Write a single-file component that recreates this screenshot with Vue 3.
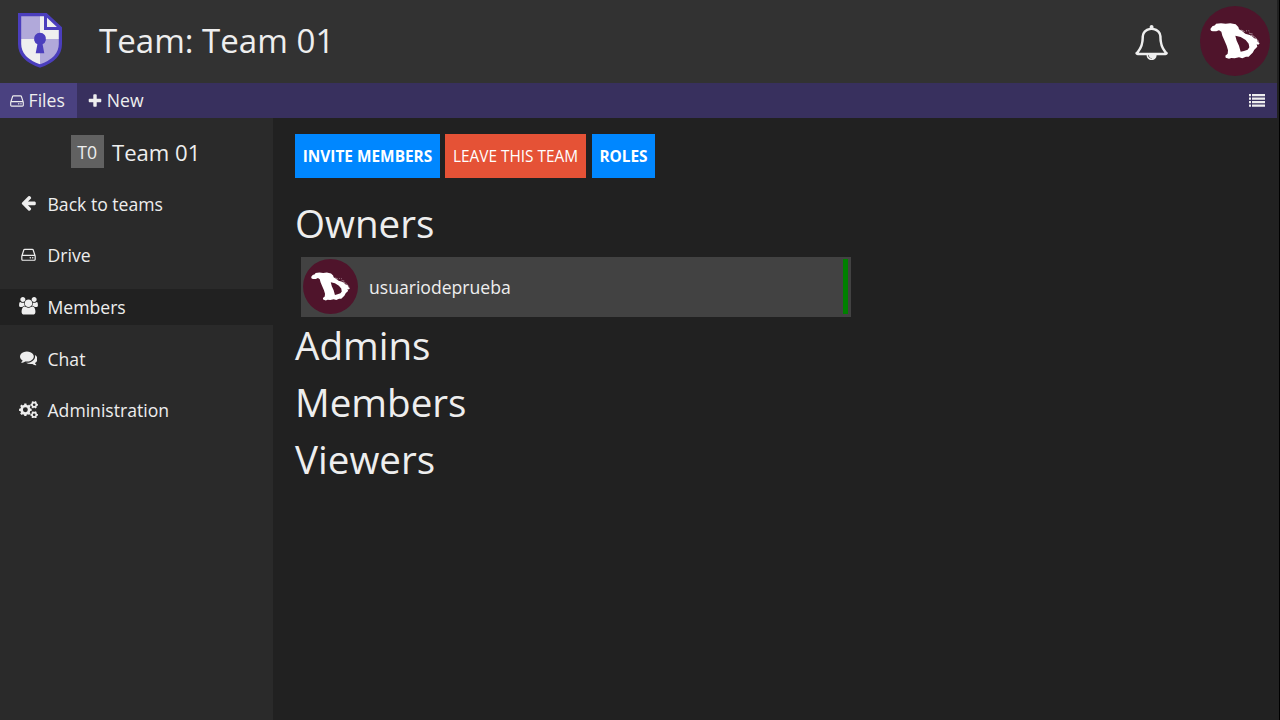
<script setup>
const icons = {
  back: { w: 1792, d: 'M1664 896v128q0 53-32.5 90.5t-84.5 37.5h-704l293 294q38 36 38 90t-38 90l-75 76q-37 37-90 37-52 0-91-37l-651-652q-37-37-37-90 0-52 37-91l651-650q38-38 91-38 52 0 90 38l75 74q38 38 38 91t-38 91l-293 293h704q52 0 84.5 37.5t32.5 90.5z' },
  drive: { w: 1792, d: 'M1168 1216q0 33-23.5 56.5t-56.5 23.5-56.5-23.5-23.5-56.5 23.5-56.5 56.5-23.5 56.5 23.5 23.5 56.5zm256 0q0 33-23.5 56.5t-56.5 23.5-56.5-23.5-23.5-56.5 23.5-56.5 56.5-23.5 56.5 23.5 23.5 56.5zm112 160v-320q0-13-9.5-22.5t-22.5-9.5h-1216q-13 0-22.5 9.5t-9.5 22.5v320q0 13 9.5 22.5t22.5 9.5h1216q13 0 22.5-9.5t9.5-22.5zm-1230-480h1180l-157-482q-4-13-16-21.5t-26-8.5h-782q-14 0-26 8.5t-16 21.5zm1358 160v320q0 66-47 113t-113 47h-1216q-66 0-113-47t-47-113v-320q0-25 16-75l197-606q17-53 63-86t101-33h782q55 0 101 33t63 86l197 606q16 50 16 75z' },
  users: { w: 1920, d: 'M593 896q-162 5-265 128h-134q-82 0-138-40.5t-56-118.5q0-353 124-353 6 0 43.5 21t97.5 42.5 119 21.5q67 0 133-23-5 37-5 66 0 139 81 256zm1071 637q0 120-73 189.5t-194 69.5h-874q-121 0-194-69.5t-73-189.5q0-53 3.5-103.5t14-109 26.5-108.5 43-97.5 62-81 85.5-53.5 111.5-20q10 0 43 21.5t73 48 107 48 135 21.5 135-21.5 107-48 73-48 43-21.5q61 0 111.5 20t85.5 53.5 62 81 43 97.5 26.5 108.5 14 109 3.5 103.5zm-1024-1277q0 106-75 181t-181 75-181-75-75-181 75-181 181-75 181 75 75 181zm704 384q0 159-112.5 271.5t-271.5 112.5-271.5-112.5-112.5-271.5 112.5-271.5 271.5-112.5 271.5 112.5 112.5 271.5zm576 225q0 78-56 118.5t-138 40.5h-134q-103-123-265-128 81-117 81-256 0-29-5-66 66 23 133 23 59 0 119-21.5t97.5-42.5 43.5-21q124 0 124 353zm-128-609q0 106-75 181t-181 75-181-75-75-181 75-181 181-75 181 75 75 181z' },
  chat: { w: 1792, d: 'M1408 768q0 139-94 257t-256.5 186.5-353.5 68.5q-86 0-176-16-124 88-278 128-36 9-86 16h-3q-11 0-20.5-8t-11.5-21q-1-3-1-6.5t.5-6.5 2-6l2.5-5 3.5-5.5 4-5 4.5-5 4-4.5q5-6 23-25t26-29.5 22.5-29 25-38.5 20.5-44q-124-72-195-177t-71-224q0-139 94-257t256.5-186.5 353.5-68.5 353.5 68.5 256.5 186.5 94 257zm384 256q0 120-71 224.5t-195 176.5q10 24 20.5 44t25 38.5 22.5 29 26 29.5 23 25q1 1 4 4.5t4.5 5 4 5 3.5 5.5l2.5 5 2 6 .5 6.5-1 6.5q-3 14-13 22t-22 7q-50-7-86-16-154-40-278-128-90 16-176 16-271 0-472-132 58 4 88 4 161 0 309-45t264-129q125-92 192-212t67-254q0-77-23-152 129 71 204 178t75 230z' },
  bell: { w: 1792, d: 'M912 1696q0-16-16-16-59 0-101.5-42.5t-42.5-101.5q0-16-16-16t-16 16q0 73 51.5 124.5t124.5 51.5q16 0 16-16zm-666-288h1300q-266-300-266-832 0-51-24-105t-69-103-121.5-80.5-169.5-31.5-169.5 31.5-121.5 80.5-69 103-24 105q0 532-266 832zm1482 0q0 52-38 90t-90 38h-448q0 106-75 181t-181 75-181-75-75-181h-448q-52 0-90-38t-38-90q50-42 91-88t85-119.5 74.5-158.5 50-206 19.5-260q0-152 117-282.5t307-158.5q-8-19-8-39 0-40 28-68t68-28 68 28 28 68q0 20-8 39 190 28 307 158.5t117 282.5q0 139 19.5 260t50 206 74.5 158.5 85 119.5 91 88z' },
  plus: { w: 1792, d: 'M1600 736v192q0 40-28 68t-68 28h-416v416q0 40-28 68t-68 28h-192q-40 0-68-28t-28-68v-416h-416q-40 0-68-28t-28-68v-192q0-40 28-68t68-28h416v-416q0-40 28-68t68-28h192q40 0 68 28t28 68v416h416q40 0 68 28t28 68z' },
}

// Outline of a toothed wheel with a round hole
function gear(cx, cy, r, inner, hole, teeth, turn = 0) {
  const pts = []
  const step = (Math.PI * 2) / teeth
  for (let i = 0; i < teeth; i++) {
    const a = i * step + turn
    for (const [k, rad] of [[-0.3, inner], [-0.22, r], [0.22, r], [0.3, inner]]) {
      pts.push(`${(cx + rad * Math.cos(a + k * step)).toFixed(0)} ${(cy + rad * Math.sin(a + k * step)).toFixed(0)}`)
    }
  }
  return `M${pts.join('L')}zM${cx - hole} ${cy}a${hole} ${hole} 0 1 0 ${hole * 2} 0a${hole} ${hole} 0 1 0 ${-hole * 2} 0z`
}
icons.cogs = {
  w: 1920,
  d: gear(640, 896, 650, 520, 250, 8) + gear(1536, 384, 390, 310, 135, 6) + gear(1536, 1408, 390, 310, 135, 6),
}

const nav = [
  { label: 'Back to teams', icon: 'back' },
  { label: 'Drive', icon: 'drive' },
  { label: 'Members', icon: 'users', active: true },
  { label: 'Chat', icon: 'chat' },
  { label: 'Administration', icon: 'cogs' },
]
const emblem = 'M31 69L37 61L45 58L48 53L63 52L77 53L91 52L107 55L115 63L117 70L127 76L136 83L149 87L156 91L163 97L170 99L173 107L179 112L175 116L170 115L172 122L163 131L158 140L151 147L146 152L138 152L127 157L117 154L104 157L94 156L87 158L77 155L76 149L83 143L84 133L80 119L73 103L67 89L64 77L57 73L49 76L38 76L33 74ZM106 89L110 104L117 119L122 137L132 135L143 131L148 124L146 113L137 102L122 93Z'
const specks = 'M122 72l9 3 3 3M138 75l3-1M145 74l3 1M147 81l5 2 6 1M153 88l9 3 8 8M166 101l7 1 3 7'
</script>

<template>
  <div class="app">
    <header class="top">
      <svg class="logo" viewBox="0 0 44 55">
        <path d="M2 2H28L42 15V31Q42 46 22 53Q2 46 2 31Z" fill="#efefef" />
        <path d="M2 2H22V26H2ZM22 26H42V31Q42 46 22 53Z" fill="#b1a9da" />
        <path d="M1.6 1.6H28L42.4 15V31Q42.4 46 22 53Q1.6 46 1.6 31Z" fill="none" stroke="#4b3ebd" stroke-width="3.2" />
        <path d="M27.5 2V15.5H42" fill="none" stroke="#4b3ebd" stroke-width="3" />
        <path d="M19.4 31.2a6 6 0 1 1 5.2 0L26.3 40.3H17.7Z" fill="#4b3ebd" />
      </svg>
      <h1>Team: Team 01</h1>
      <svg class="bell" viewBox="0 0 1792 1792"><path :d="icons.bell.d" /></svg>
      <svg class="avatar big" viewBox="0 0 210 210">
        <circle cx="105" cy="105" r="105" fill="#4f142b" />
        <path :d="emblem" fill="#fff" fill-rule="evenodd" />
        <path :d="specks" fill="none" stroke="#fff" stroke-width="1.5" />
      </svg>
    </header>
    <nav class="toolbar">
      <div class="tool files"><svg viewBox="0 0 1792 1792"><path :d="icons.drive.d" /></svg><span>Files</span></div>
      <div class="tool new"><svg viewBox="0 0 1792 1792"><path :d="icons.plus.d" /></svg><span>New</span></div>
      <svg class="list" viewBox="0 0 16 13"><path d="M0 0h2v2.3H0zM3 0h13v2.3H3zM0 3.5h2v2.3H0zM3 3.5h13v2.3H3zM0 7h2v2.3H0zM3 7h13v2.3H3zM0 10.5h2v2.3H0zM3 10.5h13v2.3H3z" /></svg>
    </nav>
    <div class="body">
      <aside>
        <div class="team"><span class="badge">T0</span><span>Team 01</span></div>
        <div v-for="n in nav" :key="n.label" class="item" :class="{ active: n.active }">
          <span class="ico"><svg :class="n.icon" :viewBox="`0 0 ${icons[n.icon].w} 1792`"><path :d="icons[n.icon].d" fill-rule="evenodd" /></svg></span>
          <span>{{ n.label }}</span>
        </div>
      </aside>
      <main>
        <div class="actions">
          <button class="invite">INVITE MEMBERS</button>
          <button class="leave">LEAVE THIS TEAM</button>
          <button class="roles">ROLES</button>
        </div>
        <h2>Owners</h2>
        <div class="member">
          <svg class="avatar" viewBox="0 0 210 210">
            <circle cx="105" cy="105" r="105" fill="#4f142b" />
            <path :d="emblem" fill="#fff" fill-rule="evenodd" />
            <path :d="specks" fill="none" stroke="#fff" stroke-width="1.5" />
          </svg>
          <span class="name">usuariodeprueba</span>
          <span class="status"></span>
        </div>
        <h2>Admins</h2>
        <h2>Members</h2>
        <h2>Viewers</h2>
      </main>
    </div>
  </div>
</template>

<style>
body { margin: 0; background: #212121; }
</style>
<style scoped>
.app { box-sizing: border-box; width: 1280px; height: 720px; display: flex; flex-direction: column; overflow: hidden; background: #212121; color: #eee; font-family: "Open Sans", "Noto Sans", sans-serif; font-size: 17.6px; border-right: 1px solid #000; }
svg { fill: #eee; flex: none; display: block; }
.top { height: 83px; box-sizing: border-box; padding-bottom: 1px; flex: none; display: flex; align-items: center; background: #323232; margin-right: 2px; }
.logo { width: 44px; height: 55px; margin: 0 0 2px 18px; }
h1 { margin: 0 auto 0 37px; font-size: 33.1px; font-weight: 400; line-height: 46px; }
.bell { width: 35.2px; height: 35.2px; margin: 3px 31px 0 0; }
.avatar { width: 55px; height: 55px; }
.big { width: 70px; height: 70px; margin-right: 7px; }
.toolbar { height: 35px; flex: none; display: flex; background: #38305e; margin-right: 2px; align-items: center; }
.tool { height: 35px; display: flex; align-items: center; box-sizing: border-box; }
.tool span { margin-bottom: 2px; }
.files { width: 77px; background: #4a4180; padding-left: 8.6px; gap: 4px; }
.files svg { width: 16px; height: 16px; }
.new { padding-left: 10px; gap: 3.8px; }
.new svg { width: 16px; height: 16px; }
.list { width: 16px; height: 13px; margin: 0 12px 0 auto; }
.body { flex: 1; display: flex; min-height: 0; }
aside { width: 273px; background: #2a2a2a; flex: none; }
.team { display: flex; align-items: center; gap: 8px; height: 33px; margin: 17px 0 18px 71px; font-size: 22.1px; }
.badge { width: 33px; height: 33px; background: #616161; font-size: 17.6px; line-height: 35px; text-align: center; text-indent: -0.5px; }
.item { height: 36px; margin-bottom: 15.6px; display: flex; align-items: center; }
.item:nth-child(3) { margin-top: -0.6px; margin-bottom: 16.2px; }
.active { background: #212121; }
.ico { width: 20px; margin: 0 9.5px 2px 18px; display: flex; justify-content: center; }
.ico svg { width: 17.6px; height: 17.6px; }
.ico svg.drive { margin-top: 1.4px; }
.ico svg.users, .ico svg.cogs { width: 19px; }
.ico svg.chat { margin-left: 0.6px; }
.ico svg.back, .ico svg.drive { width: 17px; margin-left: 1px; }
main { padding: 16px 0 0 22px; flex: 1; }
.actions { display: flex; height: 44px; margin-bottom: 17px; }
button { border: 0; padding: 0; margin: 0; color: #fff; font-family: inherit; font-size: 15.4px; height: 44px; white-space: nowrap; }
.invite { width: 145px; background: #0087ff; font-weight: 700; margin-right: 5px; }
.leave { width: 141px; background: #e55236; margin-right: 6px; }
.roles { width: 63px; background: #0087ff; font-weight: 700; }
h2 { margin: 0; height: 57px; line-height: 57px; font-size: 38.6px; font-weight: 400; }
.member { box-sizing: border-box; width: 550px; height: 60px; margin: 5px 0 0 6px; padding: 2px 3px 3px 2px; display: flex; background: #424242; }
.name { margin: 0 auto 0 11px; line-height: 56px; }
.status { width: 5px; background: #008000; }
</style>
